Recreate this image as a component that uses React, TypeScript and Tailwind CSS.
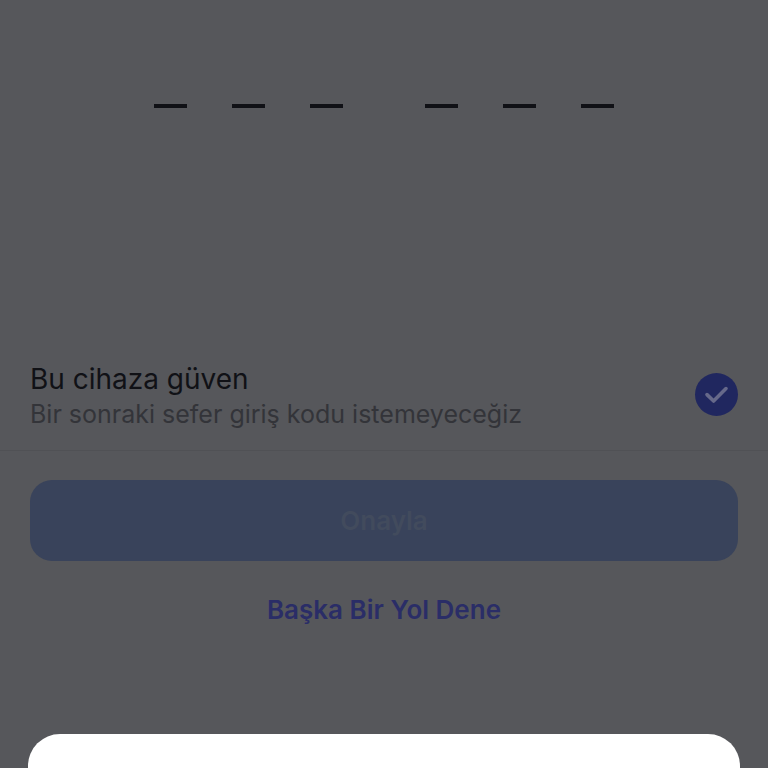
import { useId } from "react"

const codeGroups = [
  [1, 2, 3],
  [4, 5, 6],
]

function CodeInput() {
  return (
    <fieldset className="flex justify-center gap-[82px] pt-[60px]">
      {codeGroups.map((group) => (
        <div key={group[0]} className="flex gap-[45px]">
          {group.map((digit) => (
            <input
              key={digit}
              type="text"
              inputMode="numeric"
              maxLength={1}
              aria-label={`Kod ${digit}`}
              className="h-12 w-[33px] border-b-4 border-[#101116] bg-transparent text-center text-[28px] text-[#101116] outline-none"
            />
          ))}
        </div>
      ))}
    </fieldset>
  )
}

function TrustDevice() {
  const id = useId()

  return (
    <label
      htmlFor={id}
      className="flex items-center justify-between border-b border-[#505155] px-[30px] pb-[21px]"
    >
      <span className="flex flex-col">
        <span className="text-[28px] leading-10 text-[#101116]">Bu cihaza güven</span>
        <span className="text-[25px] leading-[30px] text-[#333439]">
          Bir sonraki sefer giriş kodu istemeyeceğiz
        </span>
      </span>

      {/* Round tick box */}
      <span className="grid size-[43px] shrink-0">
        <input
          id={id}
          type="checkbox"
          defaultChecked
          className="peer col-start-1 row-start-1 size-full appearance-none rounded-full border-2 border-[#333439] checked:border-0 checked:bg-[#20275f]"
        />
        <svg
          viewBox="0 0 43 43"
          fill="none"
          stroke="#66698a"
          strokeWidth="3.6"
          strokeLinecap="round"
          strokeLinejoin="round"
          className="pointer-events-none invisible col-start-1 row-start-1 size-full peer-checked:visible"
          aria-hidden="true"
        >
          <path d="M12 21.6 L18.6 28 L31 15.6" />
        </svg>
      </span>
    </label>
  )
}

export default function App() {
  return (
    <div className="flex min-h-screen flex-col overflow-hidden bg-[#56575b] font-['Inter',sans-serif]">
      <main>
        <CodeInput />

        <form className="pt-[251px]" onSubmit={(e) => e.preventDefault()}>
          <TrustDevice />

          <div className="flex flex-col items-center gap-[29px] px-[30px] pt-[29px]">
            <button
              type="submit"
              disabled
              className="h-[81px] w-full rounded-[22px] bg-[#39435b] text-[26px] font-semibold text-[#424b5d]"
            >
              Onayla
            </button>
            <button type="button" className="text-[26px] leading-10 font-semibold text-[#2a2d67]">
              Başka Bir Yol Dene
            </button>
          </div>
        </form>
      </main>

      {/* Top edge of the bottom sheet */}
      <section className="mx-7 mt-auto h-[34px] rounded-t-[32px] bg-white" />
    </div>
  )
}
